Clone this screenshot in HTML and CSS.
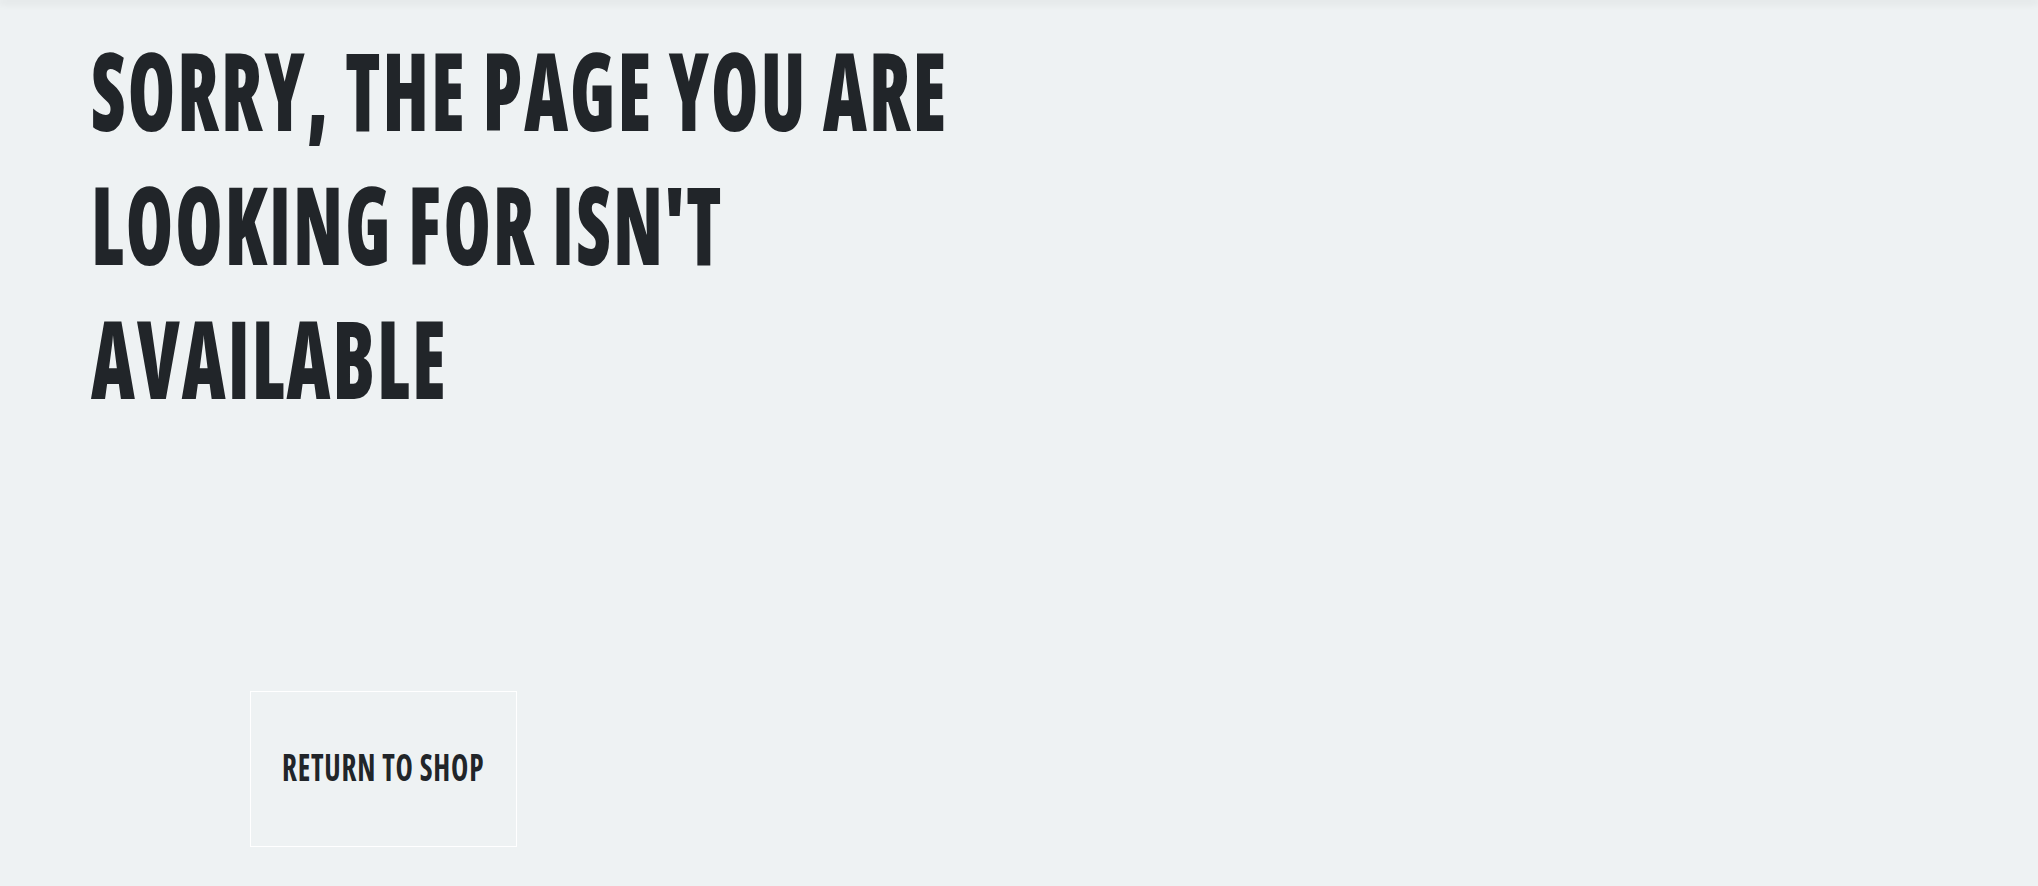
FILE: index.html
```html
<!DOCTYPE html>
<html lang="en">
<head>
<meta charset="utf-8">
<title>Page not found</title>
<link rel="stylesheet" href="styles.css">
</head>
<body>
<header class="site-header"></header>
<main class="not-found">
  <h1 class="not-found__title">Sorry, the page you are looking for isn't available</h1>
  <div class="not-found__actions">
    <a class="btn-outline" href="#"><span class="btn-outline__label">Return to shop</span></a>
  </div>
</main>
</body>
</html>
```
FILE: styles.css
```css
html, body {
  margin: 0;
  padding: 0;
}
body {
  background: #eef2f3;
  color: #212529;
  font-family: "Open Sans", "Roboto", sans-serif;
  min-height: 886px;
}
.site-header {
  height: 0;
  box-shadow: 0 1px 9px 2px rgba(0, 0, 0, 0.09);
}
.not-found {
  padding: 22px 0 0 91px;
}
.not-found__title {
  margin: 0;
  width: 1300px;
  font-size: 109px;
  line-height: 134px;
  font-weight: 800;
  font-stretch: 75%;
  text-transform: uppercase;
  letter-spacing: 3px;
  transform: scaleX(0.70);
  transform-origin: left top;
}
.not-found__actions {
  margin: 267px 0 0 159px;
}
.btn-outline {
  display: flex;
  align-items: center;
  justify-content: center;
  box-sizing: border-box;
  width: 267px;
  height: 156px;
  border: 1px solid #ffffff;
  color: #212529;
  text-decoration: none;
  padding-bottom: 6px;
}
.btn-outline__label {
  display: inline-block;
  font-size: 37px;
  line-height: 1;
  font-weight: 700;
  font-stretch: 75%;
  text-transform: uppercase;
  letter-spacing: 1px;
  white-space: nowrap;
  transform: scaleX(0.79);
}
```
